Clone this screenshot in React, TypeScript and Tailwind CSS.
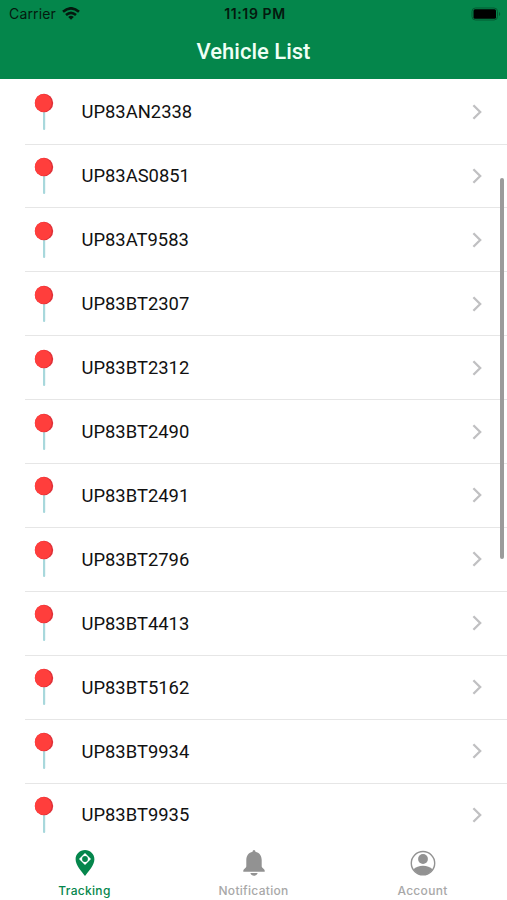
import type { ReactNode } from "react";

const vehicles = [
  "UP83AN2338",
  "UP83AS0851",
  "UP83AT9583",
  "UP83BT2307",
  "UP83BT2312",
  "UP83BT2490",
  "UP83BT2491",
  "UP83BT2796",
  "UP83BT4413",
  "UP83BT5162",
  "UP83BT9934",
  "UP83BT9935",
];

function WifiIcon() {
  return (
    <svg viewBox="0 0 18 13" className="h-[13px] w-[18px]" fill="none" stroke="currentColor" strokeWidth={2.6}>
      <path d="M1 4.8Q9-2.2 17 4.8" />
      <path d="M4 8Q9 3.7 14 8" />
      <path d="M9 12.8 6.2 9.9Q9 7.8 11.8 9.9Z" fill="currentColor" stroke="none" />
    </svg>
  );
}

function BatteryIcon() {
  return (
    <svg viewBox="0 0 30 14" className="h-[14px] w-[30px]">
      <rect x="1" y="1" width="25.5" height="12" rx="3.5" fill="none" stroke="#035b32" />
      <rect x="2.5" y="2.3" width="22.5" height="9.4" rx="1.5" fill="#000" />
      <path d="M28 5v4c1.6-.6 1.6-3.4 0-4Z" fill="#035b32" />
    </svg>
  );
}

function PushPin() {
  return (
    <svg viewBox="0 0 20 38" className="h-[38px] w-5 shrink-0">
      <rect x="9" y="17" width="2.2" height="20" rx="1" fill="#a8d8dc" />
      <circle cx="10" cy="10" r="9.2" fill="#df3038" />
      <ellipse cx="9.2" cy="10" rx="8.4" ry="9" fill="#ff3e3c" />
    </svg>
  );
}

function Chevron() {
  return (
    <svg viewBox="0 0 10 16" className="h-4 w-[10px]" fill="none" stroke="#c0c0c2" strokeWidth={2.3}>
      <path d="M1.4 1.2 8.2 8l-6.8 6.8" />
    </svg>
  );
}

function TrackingIcon() {
  return (
    <svg viewBox="0 0 20 28" className="h-7 w-5">
      <path d="M10 1C4.9 1 .6 5 .6 10.2c0 6.2 6 12.2 9.4 16.8 3.4-4.6 9.4-10.6 9.4-16.8C19.4 5 15.1 1 10 1Z" fill="currentColor" />
      <path d="M10 4 16 10 10 16 4 10Z" fill="#fff" />
      <circle cx="10" cy="10" r="2.9" fill="currentColor" />
    </svg>
  );
}

function BellIcon() {
  return (
    <svg viewBox="0 0 24 28" className="h-7 w-6" fill="currentColor">
      <path d="M12 .9c-.8 0-1.4.8-1.4 1.8C6.7 3.5 4.3 6.7 4.3 11v6.6c0 1.4-3 2.7-3 4v1.2h21.4v-1.2c0-1.3-3-2.6-3-4V11c0-4.3-2.4-7.5-6.3-8.3 0-1-.6-1.8-1.4-1.8Z" />
      <path d="M8.4 24h7.2c-.5 1.7-1.8 2.7-3.6 2.7S8.9 25.7 8.4 24Z" />
    </svg>
  );
}

function AccountIcon() {
  return (
    <svg viewBox="0 0 26 28" className="h-7 w-[26px]" fill="currentColor">
      <circle cx="13" cy="14.2" r="11.7" fill="none" stroke="currentColor" strokeWidth={1.4} />
      <circle cx="13" cy="10" r="4.9" />
      <path d="M3.5 20.2c2.3-2.3 5.6-3.5 9.5-3.5s7.2 1.2 9.5 3.5C20.6 23.7 17 25.9 13 25.9S5.4 23.7 3.5 20.2Z" />
    </svg>
  );
}

function Tab({ label, active, children }: { label: string; active?: boolean; children: ReactNode }) {
  return (
    <button
      className={`flex flex-1 flex-col items-center pt-px ${active ? "text-[#05864c]" : "text-[#929292]"}`}
    >
      {children}
      <span
        className={`mt-[6px] text-[12px] leading-4 font-medium tracking-[0.3px] ${active ? "" : "text-[#a8a8a8]"}`}
      >
        {label}
      </span>
    </button>
  );
}

export default function App() {
  return (
    <div className="relative flex h-[900px] w-full flex-col overflow-hidden bg-white font-['Inter','Liberation_Sans',sans-serif]">
      <header className="h-[79px] shrink-0 bg-[#04864b]">
        <div className="grid h-[27px] grid-cols-3 items-center pr-[6px] pl-[9px] text-[#04190e]">
          <div className="flex items-center gap-[6px] text-[14px] tracking-[0.15px]">
            Carrier
            <WifiIcon />
          </div>
          <span className="text-center text-[14px] font-semibold tracking-[0.6px]">11:19 PM</span>
          <div className="flex justify-end">
            <BatteryIcon />
          </div>
        </div>
        <h1 className="text-center font-[Roboto,sans-serif] text-[22px] leading-[50px] font-medium text-[#effff5]">
          Vehicle List
        </h1>
      </header>

      <ul className="flex h-[768.5px] shrink-0 flex-col pt-[1.6px] pl-[25px]">
        {vehicles.map((plate, i) => (
          <li
            key={plate}
            className={`flex min-h-0 flex-1 items-center border-b pr-[25px] pl-[8.5px] ${
              i === vehicles.length - 1 ? "border-transparent" : "border-[#e6e6e6]"
            }`}
          >
            <PushPin />
            <span className="ml-[28px] flex-1 pt-[0.5px] font-[Roboto,sans-serif] text-[18.4px] text-[#111]">
              {plate}
            </span>
            <Chevron />
          </li>
        ))}
      </ul>

      <nav className="flex flex-1 bg-white">
        <Tab label="Tracking" active>
          <TrackingIcon />
        </Tab>
        <Tab label="Notification">
          <BellIcon />
        </Tab>
        <Tab label="Account">
          <AccountIcon />
        </Tab>
      </nav>

      {/* scroll indicator */}
      <div className="absolute top-[178px] right-[3px] h-[381px] w-1 rounded-full bg-[#9b9b9b]" />
    </div>
  );
}
